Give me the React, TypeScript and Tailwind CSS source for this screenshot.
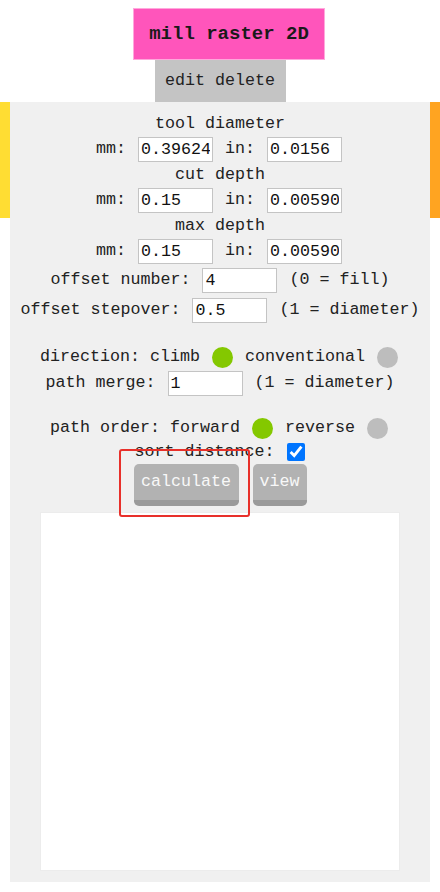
import React from "react";

const mono = { fontFamily: '"Liberation Mono", "DejaVu Sans Mono", monospace' };

const Field = ({ value }: { value: string }) => (
  <input
    type="text"
    defaultValue={value}
    className="w-[75px] h-[25px] mx-[2px] border border-[#c4c4c4] bg-white px-[2px] text-[16.67px] text-[#111] outline-none"
    style={mono}
  />
);

const Dot = ({ on }: { on: boolean }) => (
  <span
    className={`inline-block w-[21px] h-[21px] mx-[2px] rounded-full ${
      on ? "bg-[#84c800]" : "bg-[#bdbdbd]"
    }`}
  />
);

const Row = ({ h = "h-[24px]", children }: { h?: string; children: React.ReactNode }) => (
  <div className={`${h} flex items-center justify-center whitespace-pre`}>{children}</div>
);

const Pair = ({ mm, inch }: { mm: string; inch: string }) => (
  <Row h="h-[27px]">
    <span>mm: </span>
    <Field value={mm} />
    <span> in: </span>
    <Field value={inch} />
  </Row>
);

export default function App() {
  return (
    <div className="w-[440px] h-[892px] bg-white text-[#222] text-[16.67px] leading-none" style={mono}>
      <div className="flex flex-col items-center pt-[8px]">
        <div className="ml-[18px] h-[52px] px-[15px] flex items-center bg-[#ff55bb] border border-[#ffa8dc] font-bold text-[19px] text-[#1a1a1a]">
          mill raster 2D
        </div>
        <div className="h-[42px] w-[131px] flex items-center justify-center bg-[#c4c4c4]">
          edit delete
        </div>
      </div>

      <div className="flex items-start">
        <div className="w-[10px] h-[116px] bg-[#ffdd33]" />
        <div className="relative flex-1 h-[780px] bg-[#f0f0f0] pt-[10px]">
          <Row>tool diameter</Row>
          <Pair mm="0.39624" inch="0.0156" />
          <Row>cut depth</Row>
          <Pair mm="0.15" inch="0.00590" />
          <Row>max depth</Row>
          <Pair mm="0.15" inch="0.00590" />
          <Row h="h-[30px]">
            <span>offset number: </span>
            <Field value="4" />
            <span> (0 = fill)</span>
          </Row>
          <Row h="h-[30px]">
            <span>offset stepover: </span>
            <Field value="0.5" />
            <span> (1 = diameter)</span>
          </Row>

          <div className="h-[20px]" />
          <Row>
            <span>direction: climb </span>
            <Dot on />
            <span> conventional </span>
            <Dot on={false} />
          </Row>
          <Row h="h-[28px]">
            <span>path merge: </span>
            <Field value="1" />
            <span> (1 = diameter)</span>
          </Row>

          <div className="h-[19px]" />
          <Row>
            <span>path order: forward </span>
            <Dot on />
            <span> reverse </span>
            <Dot on={false} />
          </Row>
          <Row>
            <span>sort distance: </span>
            <input type="checkbox" defaultChecked className="w-[18px] h-[18px] ml-[3px] accent-[#0075ff]" />
          </Row>

          <div className="flex justify-center gap-[14px]">
            <button className="h-[42px] w-[105px] rounded-[5px] bg-[#b2b2b2] border-b-[6px] border-[#9a9a9a] text-[#f8f8f8] text-[16.67px]" style={mono}>
              calculate
            </button>
            <button className="h-[42px] w-[54px] rounded-[5px] bg-[#b2b2b2] border-b-[6px] border-[#9a9a9a] text-[#f8f8f8] text-[16.67px]" style={mono}>
              view
            </button>
          </div>

          <div className="mx-auto mt-[6px] w-[360px] h-[359px] bg-white border border-[#ececec]" />

          <div className="absolute left-[109px] top-[347px] w-[131px] h-[68px] border-2 border-[#e8302a] rounded-[3px] pointer-events-none" />
        </div>
        <div className="w-[10px] h-[116px] bg-[#ffa421]" />
      </div>
    </div>
  );
}
